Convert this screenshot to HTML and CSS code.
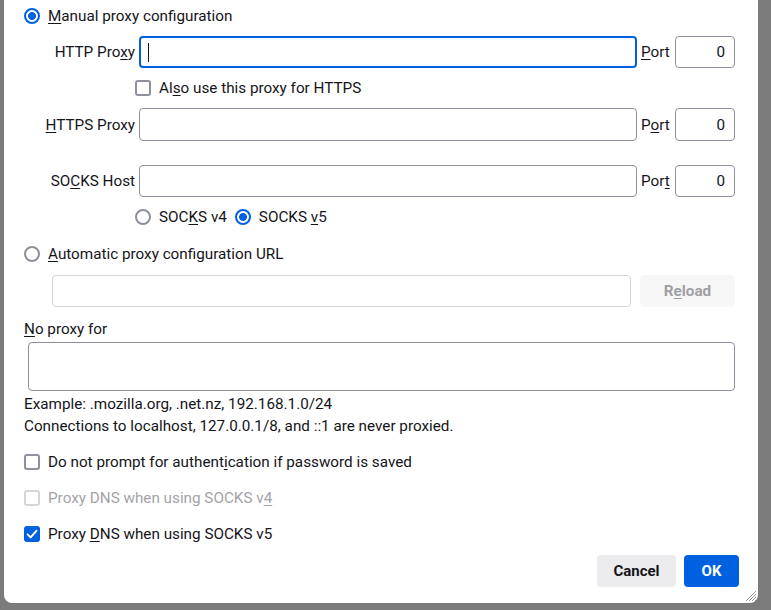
FILE: index.html
```html
<!DOCTYPE html>
<html lang="en">
<head>
<meta charset="utf-8">
<title>Connection Settings</title>
<link rel="stylesheet" href="styles.css">
</head>
<body>
<div class="dialog">
  <div class="head-row">
    <span class="radio checked"></span>
    <span class="txt"><u>M</u>anual proxy configuration</span>
  </div>

  <div class="row first">
    <span class="lbl">HTTP Pro<u>x</u>y</span>
    <div class="field focused"><span class="caret"></span></div>
    <span class="port-lbl"><u>P</u>ort</span>
    <div class="port">0</div>
  </div>
  <div class="check-row indent">
    <span class="checkbox"></span>
    <span class="txt">Al<u>s</u>o use this proxy for HTTPS</span>
  </div>
  <div class="row tall">
    <span class="lbl"><u>H</u>TTPS Proxy</span>
    <div class="field"></div>
    <span class="port-lbl">P<u>o</u>rt</span>
    <div class="port">0</div>
  </div>
  <div class="row socks">
    <span class="lbl">SO<u>C</u>KS Host</span>
    <div class="field"></div>
    <span class="port-lbl">Por<u>t</u></span>
    <div class="port">0</div>
  </div>
  <div class="radio-row indent">
    <span class="radio"></span>
    <span class="txt">SOC<u>K</u>S v4</span>
    <span class="radio checked"></span>
    <span class="txt">SOCKS <u>v</u>5</span>
  </div>

  <div class="auto-row">
    <span class="radio"></span>
    <span class="txt"><u>A</u>utomatic proxy configuration URL</span>
  </div>
  <div class="url-row">
    <div class="url-field"></div>
    <div class="reload">R<u>e</u>load</div>
  </div>

  <div class="np-label"><u>N</u>o proxy for</div>
  <div class="np-area"></div>
  <div class="hint">
    <div>Example: .mozilla.org, .net.nz, 192.168.1.0/24</div>
    <div>Connections to localhost, 127.0.0.1/8, and ::1 are never proxied.</div>
  </div>

  <div class="opts">
    <div class="opt">
      <span class="checkbox"></span>
      <span class="txt">Do not prompt for authent<u>i</u>cation if password is saved</span>
    </div>
    <div class="opt disabled">
      <span class="checkbox"></span>
      <span class="txt">Proxy DNS when using SOCKS v<u>4</u></span>
    </div>
    <div class="opt">
      <span class="checkbox on"><svg viewBox="0 0 16 16" width="16" height="16"><path d="M3.6 8.4l3 3 5.8-6.6" fill="none" stroke="#fff" stroke-width="2" stroke-linecap="round" stroke-linejoin="round"/></svg></span>
      <span class="txt">Proxy <u>D</u>NS when using SOCKS v5</span>
    </div>
  </div>

  <div class="buttons">
    <button class="btn cancel">Cancel</button>
    <button class="btn ok">OK</button>
  </div>

  <svg class="grip" width="12" height="12" viewBox="0 0 12 12">
    <path d="M11 1L1 11M11 4L4 11M11 7L7 11M11 10L10 11" stroke="#9a9a9a" stroke-width="1"/>
  </svg>
</div>
</body>
</html>
```

FILE: styles.css
```css
html, body {
  margin: 0;
  padding: 0;
}

body {
  width: 771px;
  height: 610px;
  overflow: hidden;
  background: #7b7b7b;
  font-family: Roboto, "Noto Sans", sans-serif;
  font-size: 15.25px;
  color: #15141a;
}

u {
  text-decoration: underline;
  text-underline-offset: 2px;
}

.dialog {
  position: relative;
  margin-left: 4px;
  width: 754px;
  height: 603px;
  box-sizing: border-box;
  padding: 0 0 0 20px;
  background: #fff;
  border-radius: 0 0 8px 8px;
}

.radio {
  flex: none;
  width: 16px;
  height: 16px;
  box-sizing: border-box;
  border: 2px solid #8f8f9d;
  border-radius: 50%;
  background: #fff;
}

.radio.checked {
  border-color: #0061e0;
  background: radial-gradient(circle, #0061e0 0 3.6px, #fff 4.2px);
}

.checkbox {
  flex: none;
  width: 16px;
  height: 16px;
  box-sizing: border-box;
  border: 2px solid #8f8f9d;
  border-radius: 3px;
  background: #fff;
  display: flex;
}

.checkbox.on {
  border: none;
  background: #0061e0;
}

.head-row,
.auto-row {
  display: flex;
  align-items: center;
  gap: 8px;
  height: 32px;
}

.auto-row {
  height: 34px;
}

.row {
  display: flex;
  align-items: center;
  gap: 4px;
  height: 32px;
}

.row.first {
  margin-top: 4px;
}

.row.tall {
  height: 33px;
}

.row.socks {
  margin-top: 24px;
}

.lbl {
  width: 111px;
  text-align: right;
}

.field {
  width: 498px;
  height: 100%;
  box-sizing: border-box;
  border: 1px solid #8f8f9d;
  border-radius: 4px;
  display: flex;
  align-items: center;
  padding-left: 7px;
}

.field.focused {
  border: 2px solid #0061e0;
}

.caret {
  width: 1px;
  height: 19px;
  background: #15141a;
}

.port-lbl {
  width: 30px;
}

.port {
  width: 60px;
  height: 100%;
  box-sizing: border-box;
  border: 1px solid #8f8f9d;
  border-radius: 4px;
  display: flex;
  align-items: center;
  justify-content: flex-end;
  padding-right: 9px;
}

.indent {
  padding-left: 111px;
}

.check-row {
  display: flex;
  align-items: center;
  gap: 8px;
  height: 40px;
}

.radio-row {
  display: flex;
  align-items: center;
  gap: 8px;
  height: 40px;
}

.url-row {
  display: flex;
  gap: 9px;
  margin-top: 4px;
  padding-left: 28px;
}

.url-field {
  width: 579px;
  height: 32px;
  box-sizing: border-box;
  border: 1px solid #d4d4da;
  border-radius: 4px;
}

.reload {
  width: 95px;
  height: 32px;
  border-radius: 4px;
  background: #f7f7f8;
  color: #a0a0a4;
  font-weight: bold;
  display: flex;
  align-items: center;
  justify-content: center;
}

.np-label {
  margin-top: 11px;
  line-height: 22px;
}

.np-area {
  margin-top: 2px;
  margin-left: 4px;
  width: 707px;
  height: 49px;
  box-sizing: border-box;
  border: 1px solid #8f8f9d;
  border-radius: 4px;
}

.hint {
  margin-top: 2px;
  line-height: 22px;
}

.opts {
  margin-top: 7px;
}

.opt {
  display: flex;
  align-items: center;
  gap: 8px;
  height: 36px;
}

.opt.disabled .checkbox {
  border-color: #d4d4da;
}

.opt.disabled .txt {
  color: #a3a3a8;
}

.buttons {
  display: flex;
  justify-content: flex-end;
  gap: 8px;
  margin-top: 3px;
  margin-right: 19px;
}

.btn {
  height: 32px;
  border: none;
  border-radius: 4px;
  font-family: inherit;
  font-size: 15px;
  font-weight: bold;
  padding: 0;
}

.cancel {
  width: 79px;
  background: #ececee;
  color: #15141a;
}

.ok {
  width: 55px;
  background: #0061e0;
  color: #fff;
}

.grip {
  position: absolute;
  right: 1px;
  bottom: 1px;
}
```
